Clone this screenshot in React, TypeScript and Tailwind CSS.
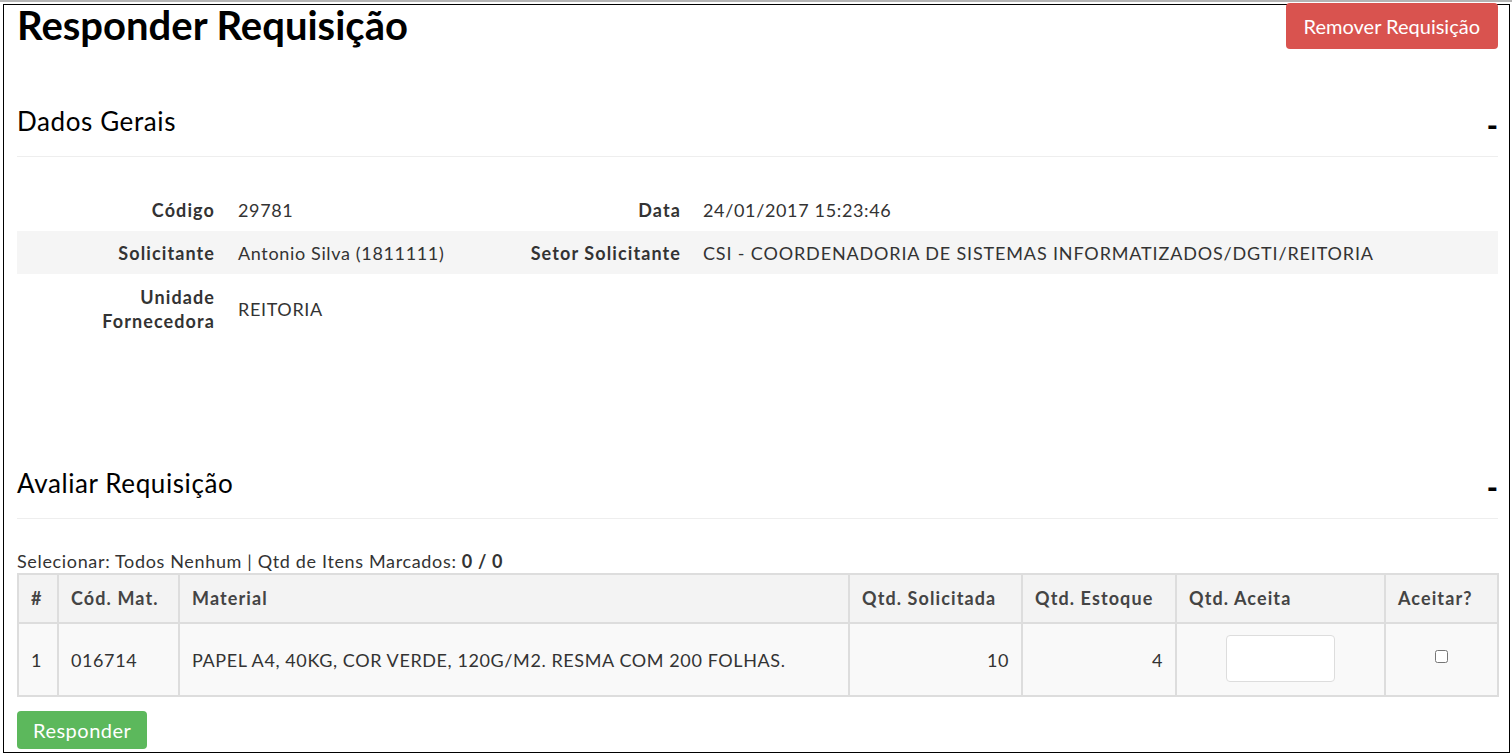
import React from "react";

export default function App() {
  return (
    <div className="w-[1512px] h-[754px] bg-white border-t-2 border-[#b4b4b4] pt-[2px] pl-[3px] pr-[2px] pb-[1px] text-[#333] [font-family:Lato,'Open_Sans',sans-serif] overflow-hidden">
      <div className="h-full border border-black pl-[13px] pr-[11px]">
        <div className="flex justify-between items-start">
          <h1 className="text-[40px] font-bold leading-[40px] text-black">Responder Requisição</h1>
          <button className="mt-[-2px] h-[46px] px-[18px] rounded-[4px] bg-[#d9534f] text-white text-[20px] leading-[24px]">
            Remover Requisição
          </button>
        </div>

        <div className="mt-[57px] flex justify-between items-start border-b border-[#eeeeee] pb-[20px]">
          <h2 className="text-[26px] leading-[30px] text-black tracking-[0.6px]">Dados Gerais</h2>
          <span className="translate-y-[4px] text-[30px] font-black leading-[30px] text-black">-</span>
        </div>

        <div className="mt-[32px] text-[18px] leading-[24px] tracking-[0.65px]">
          <div className="flex items-center h-[42px]">
            <div className="w-[198px] text-right font-bold tracking-[1.1px]">Código</div>
            <div className="ml-[23px] w-[245px]">29781</div>
            <div className="w-[198px] text-right font-bold tracking-[1.1px]">Data</div>
            <div className="ml-[22px]">24/01/2017 15:23:46</div>
          </div>
          <div className="flex items-center h-[43px] bg-[#f5f5f5]">
            <div className="w-[198px] text-right font-bold tracking-[1.1px]">Solicitante</div>
            <div className="ml-[23px] w-[245px]">Antonio Silva (1811111)</div>
            <div className="w-[198px] text-right font-bold tracking-[1.1px]">Setor Solicitante</div>
            <div className="ml-[22px] tracking-[0.85px]">CSI - COORDENADORIA DE SISTEMAS INFORMATIZADOS/DGTI/REITORIA</div>
          </div>
          <div className="flex items-center py-[11px]">
            <div className="w-[198px] text-right font-bold tracking-[1.1px]">
              Unidade
              <br />
              Fornecedora
            </div>
            <div className="ml-[23px] w-[245px]">REITORIA</div>
          </div>
        </div>

        <div className="mt-[124px] flex justify-between items-start border-b border-[#eeeeee] pb-[20px]">
          <h2 className="text-[26px] leading-[30px] text-black tracking-[0.6px]">Avaliar Requisição</h2>
          <span className="translate-y-[4px] text-[30px] font-black leading-[30px] text-black">-</span>
        </div>

        <div className="mt-[30px] text-[18px] leading-[24px] tracking-[0.65px]">
          Selecionar: Todos Nenhum | Qtd de Itens Marcados: <b>0 / 0</b>
        </div>

        <table className="w-[1480px] table-fixed border-collapse text-[18px] leading-[24px] tracking-[0.6px]">
          <colgroup>
            <col className="w-[40px]" />
            <col className="w-[121px]" />
            <col className="w-[670px]" />
            <col className="w-[173px]" />
            <col className="w-[154px]" />
            <col className="w-[209px]" />
            <col className="w-[113px]" />
          </colgroup>
          <thead>
            <tr className="h-[49px] bg-[#f3f3f3] text-[#444] tracking-[1.1px]">
              <th className="border-2 border-[#dddddd] px-[12px] pb-[2px] text-left font-bold">#</th>
              <th className="border-2 border-[#dddddd] px-[12px] pb-[2px] text-left font-bold">Cód. Mat.</th>
              <th className="border-2 border-[#dddddd] px-[12px] pb-[2px] text-left font-bold">Material</th>
              <th className="border-2 border-[#dddddd] px-[12px] pb-[2px] text-left font-bold">Qtd. Solicitada</th>
              <th className="border-2 border-[#dddddd] px-[12px] pb-[2px] text-left font-bold">Qtd. Estoque</th>
              <th className="border-2 border-[#dddddd] px-[12px] pb-[2px] text-left font-bold">Qtd. Aceita</th>
              <th className="border-2 border-[#dddddd] px-[12px] pb-[2px] text-left font-bold">Aceitar?</th>
            </tr>
          </thead>
          <tbody>
            <tr className="h-[73px] bg-[#f9f9f9]">
              <td className="border-2 border-[#dddddd] px-[12px]">1</td>
              <td className="border-2 border-[#dddddd] px-[12px]">016714</td>
              <td className="border-2 border-[#dddddd] px-[12px]">PAPEL A4, 40KG, COR VERDE, 120G/M2. RESMA COM 200 FOLHAS.</td>
              <td className="border-2 border-[#dddddd] px-[12px] text-right">10</td>
              <td className="border-2 border-[#dddddd] px-[12px] text-right">4</td>
              <td className="border-2 border-[#dddddd] px-[12px]">
                <div className="flex justify-center">
                  <input type="text" className="w-[109px] h-[47px] bg-white border border-[#dddddd] rounded-[4px] mb-[3px]" />
                </div>
              </td>
              <td className="border-2 border-[#dddddd] px-[12px]">
                <div className="flex justify-center mb-[6px]">
                  <input type="checkbox" className="w-[13px] h-[13px]" />
                </div>
              </td>
            </tr>
          </tbody>
        </table>

        <button className="mt-[14px] h-[38px] px-[16px] rounded-[4px] bg-[#5cb85c] text-white text-[20px] leading-[24px] tracking-[0.5px]">
          Responder
        </button>
      </div>
    </div>
  );
}
